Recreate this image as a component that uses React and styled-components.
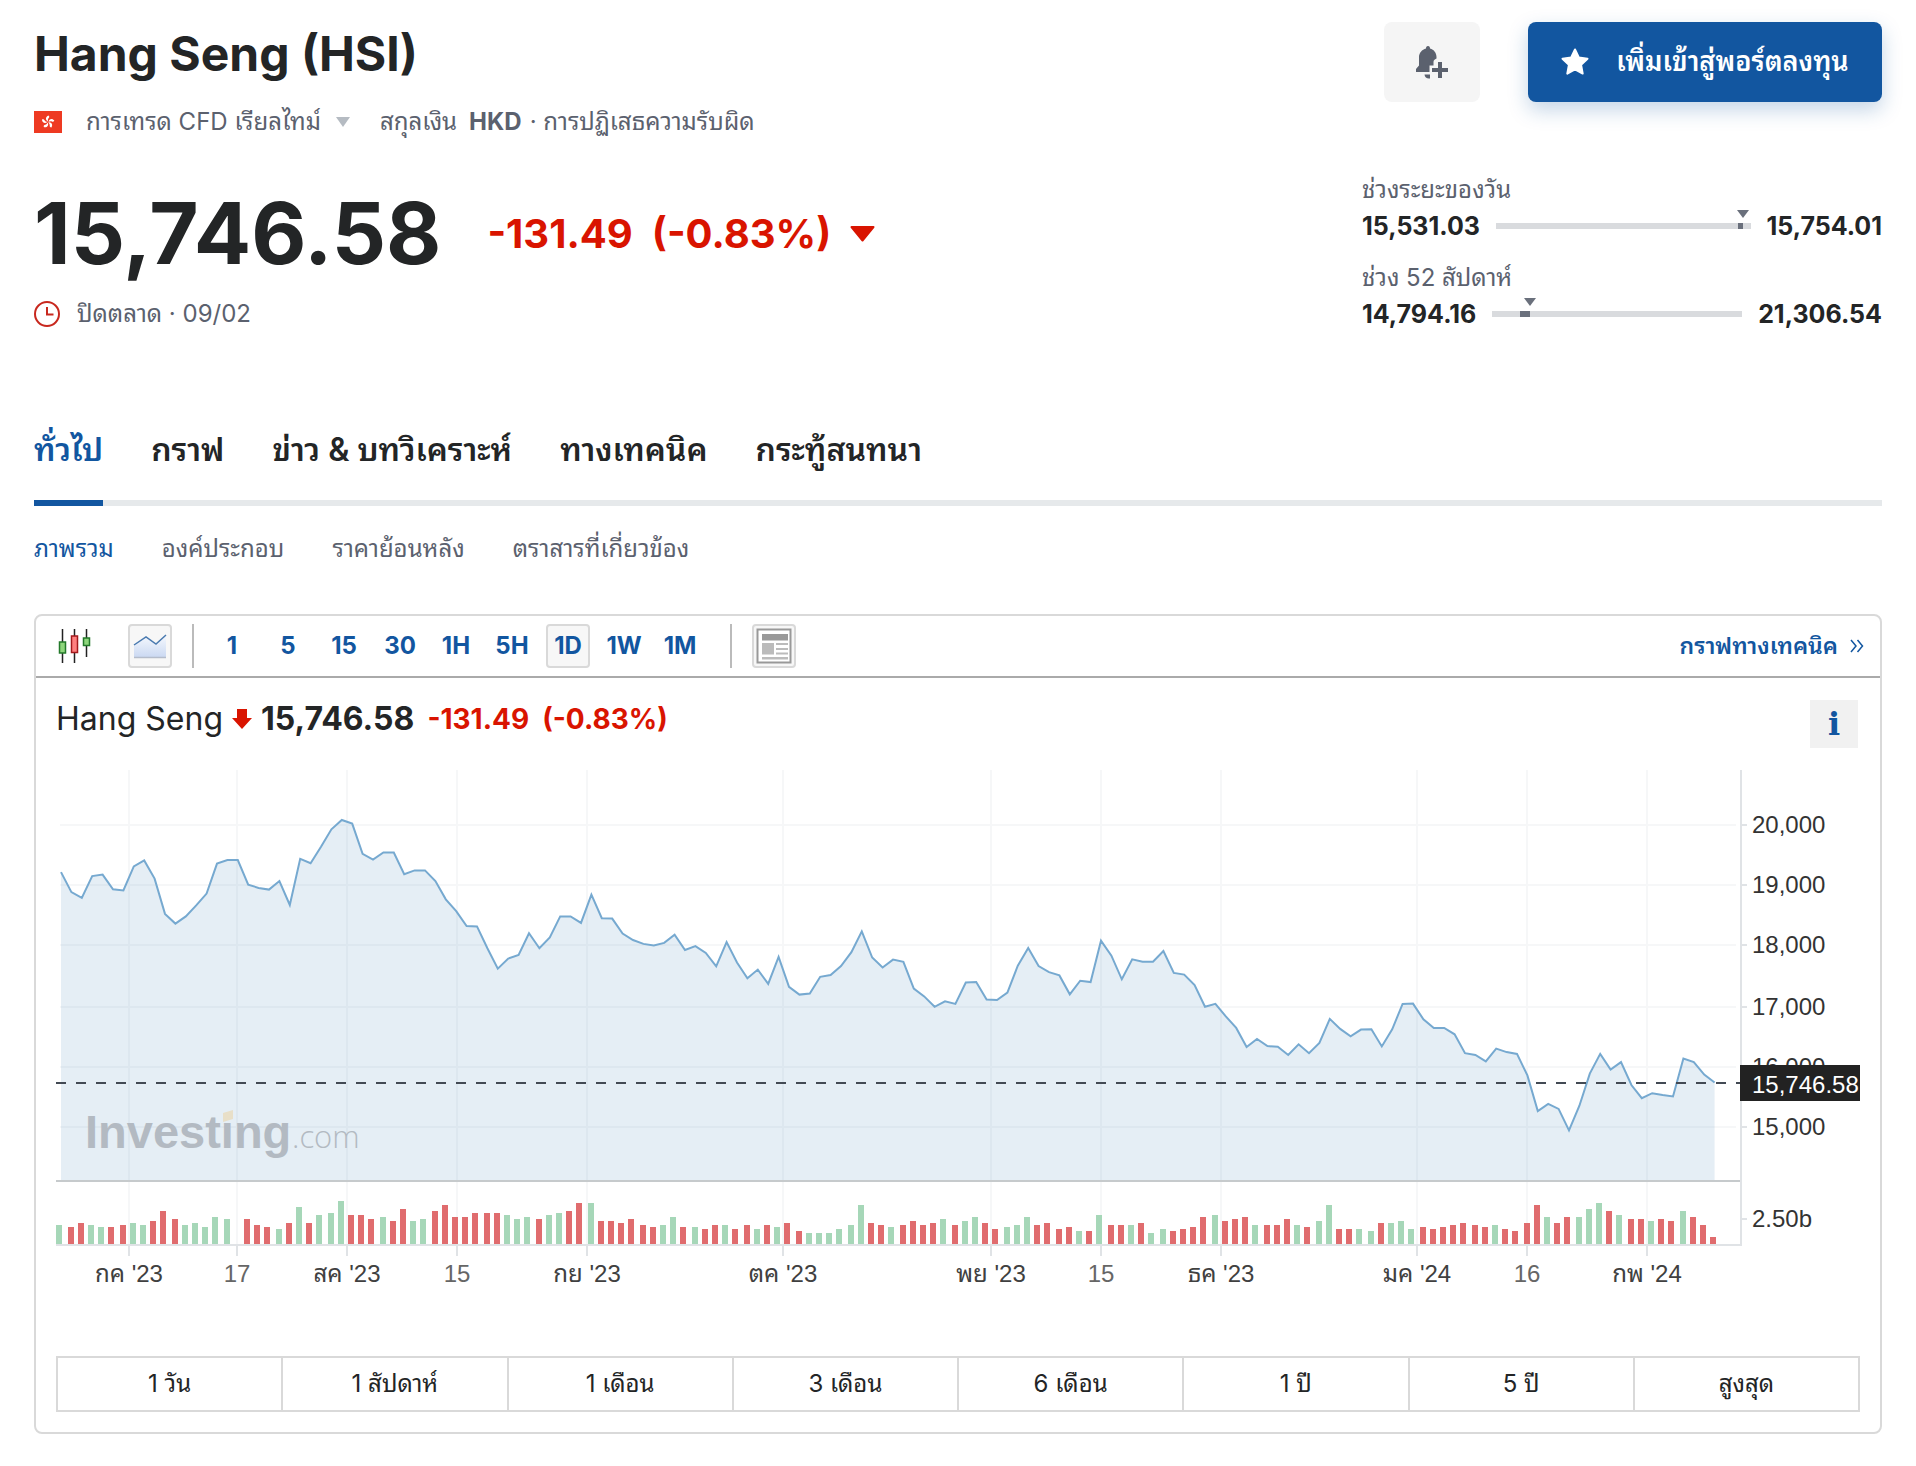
import React from "react";
import styled, { createGlobalStyle } from "styled-components";

const GlobalStyle = createGlobalStyle`
  *, *::before, *::after { box-sizing: border-box; }
  body {
    margin: 0;
    background: #fff;
    color: #232526;
    font-family: Inter, "Noto Sans Thai Looped", Thonburi, Loma, Garuda, Waree, "Liberation Sans", sans-serif;
    font-size: 24px;
    line-height: 36px;
  }
  button { font: inherit; color: inherit; border: 0; background: none; padding: 0; cursor: pointer; }
  a { color: inherit; text-decoration: none; }
  h1, h2, p { margin: 0; }
  svg { display: block; flex: none; }
`;

const Page = styled.main`
  padding: 22px 34px 32px;
`;

const Header = styled.header`
  display: flex;
  justify-content: space-between;
  gap: 48px;
`;

const Summary = styled.div`
  min-width: 0;
`;

const Title = styled.h1`
  font-size: 48px;
  line-height: 64px;
  font-weight: 700;
`;

const InfoRow = styled.div`
  display: flex;
  align-items: center;
  margin-top: 18px;
  color: #5b616e;
  white-space: nowrap;
`;

const MarketButton = styled.button`
  display: flex;
  align-items: center;
  gap: 14px;
  margin: 0 29px 0 24px;
`;

const Currency = styled.b`
  margin: 0 8px 0 12px;
`;

const PriceRow = styled.div`
  display: flex;
  align-items: center;
  margin-top: 44px;
`;

const LastPrice = styled.span`
  font-size: 85px;
  line-height: 100px;
  font-weight: 700;
`;

const Change = styled.span`
  display: flex;
  align-items: center;
  gap: 19px;
  margin-left: 46px;
  color: #d91400;
  font-size: 40px;
  font-weight: 700;
`;

const ClosedRow = styled.div`
  display: flex;
  align-items: center;
  gap: 17px;
  margin-top: 12px;
  color: #5b616e;
`;

const Aside = styled.div`
  width: 520px;
  flex: none;
`;

const Actions = styled.div`
  display: flex;
  justify-content: flex-end;
  gap: 48px;
  margin-bottom: 70px;
`;

const AlertButton = styled.button`
  display: grid;
  place-items: center;
  width: 96px;
  height: 80px;
  border-radius: 8px;
  background: #f5f5f5;
`;

const PortfolioButton = styled.button`
  display: flex;
  align-items: center;
  justify-content: center;
  gap: 27px;
  width: 354px;
  height: 80px;
  border-radius: 8px;
  background: #1256a0;
  color: #fff;
  font-size: 27px;
  font-weight: 600;
  white-space: nowrap;
  box-shadow: 0 8px 20px rgba(18, 86, 160, 0.25);
`;

const RangeBlock = styled.div`
  margin-top: 16px;
`;

const RangeLabel = styled.p`
  color: #5b616e;
`;

const RangeValues = styled.div`
  display: flex;
  align-items: center;
  gap: 16px;
  font-size: 25px;
  font-weight: 700;
`;

const Track = styled.div`
  position: relative;
  flex: 1;
  height: 6px;
  background: #d9dbde;
`;

const TrackFill = styled.span`
  position: absolute;
  top: 0;
  height: 6px;
  background: #6a707c;
`;

const TrackPointer = styled.span`
  position: absolute;
  top: -13px;
  margin-left: -6px;
  border: 6px solid transparent;
  border-top: 8px solid #6a707c;
  border-bottom: 0;
`;

const Tabs = styled.nav`
  display: flex;
  gap: 48px;
  margin-top: 98px;
  box-shadow: inset 0 -6px #e6e9eb;
`;

const Tab = styled.a`
  height: 76px;
  border-bottom: 6px solid ${(p) => (p.$active ? "#1256a0" : "transparent")};
  color: ${(p) => (p.$active ? "#1256a0" : "#232526")};
  font-size: 32px;
  line-height: 40px;
  font-weight: 600;
  white-space: nowrap;
`;

const SubTabs = styled.nav`
  display: flex;
  gap: 48px;
  margin: 25px 0 47px;
`;

const SubTab = styled.a`
  height: 36px;
  color: ${(p) => (p.$active ? "#1256a0" : "#5b616e")};
  white-space: nowrap;
`;

const ChartCard = styled.section`
  border: 2px solid #d9d9d9;
  border-radius: 8px;
`;

const Toolbar = styled.div`
  display: flex;
  align-items: center;
  height: 62px;
  padding: 0 16px;
  border-bottom: 2px solid #aaa;
`;

const ChartTypes = styled.div`
  display: flex;
  gap: 32px;
`;

const Intervals = styled.div`
  display: flex;
  gap: 12px;
`;

const ToolButton = styled.button`
  display: grid;
  place-items: center;
  width: 44px;
  height: 44px;
  border: 2px solid ${(p) => (p.$active ? "#d9d9d9" : "transparent")};
  border-radius: 4px;
  background: ${(p) => (p.$active ? "#f7f7f7" : "transparent")};
  color: #1256a0;
  font-weight: 700;
  white-space: nowrap;
`;

const Divider = styled.span`
  width: 2px;
  height: 44px;
  margin: 0 ${(p) => p.$after}px 0 ${(p) => p.$before}px;
  background: #bbb;
`;

const TechnicalLink = styled.a`
  display: flex;
  align-items: center;
  gap: 12px;
  margin-left: auto;
  color: #1256a0;
  font-size: 23px;
  font-weight: 600;
`;

const ChartBody = styled.div`
  padding: 22px 20px 20px;
`;

const ChartHead = styled.div`
  display: flex;
  align-items: flex-start;
  margin-bottom: 22px;
  padding-right: 2px;
  line-height: 38px;
`;

const ChartName = styled.h2`
  display: flex;
  align-items: center;
  gap: 9px;
  font-size: 32px;
  font-weight: 400;
`;

const ChartChange = styled.span`
  display: flex;
  gap: 13px;
  margin-left: 13px;
  color: #d91400;
  font-size: 28px;
  font-weight: 700;
`;

const InfoButton = styled.button`
  width: 48px;
  height: 48px;
  margin-left: auto;
  background: #f1f1f1;
  color: #1256a0;
  font-family: "DejaVu Serif", serif;
  font-size: 32px;
  font-weight: 700;
`;

const ChartSvg = styled.svg`
  width: 100%;
  height: auto;
  font-family: "Liberation Sans", "Noto Sans Thai Looped", Thonburi, Loma, Garuda, Waree, Arial, sans-serif;
  font-size: 24px;
`;

const Periods = styled.div`
  display: grid;
  grid-template-columns: repeat(8, 1fr);
  margin-top: 56px;
  border: 2px solid #d9d9d9;
  border-left: 0;
`;

const Period = styled.button`
  height: 52px;
  border-left: 2px solid #d9d9d9;
`;

/* Daily close, as depth below the top of the price pane in chart units. */
const CLOSES = [
  258, 314, 330, 269, 265, 306, 309, 242, 225, 276, 375, 402, 382, 351, 318, 234, 224, 224, 293, 302,
  307, 283, 350, 221, 233, 187, 138, 112, 122, 207, 223, 203, 203, 264, 253, 253, 283, 334, 367, 409,
  410, 471, 528, 500, 490, 429, 471, 441, 382, 382, 400, 321, 387, 388, 430, 448, 459, 463, 456, 433,
  476, 465, 484, 522, 454, 511, 555, 531, 571, 495, 579, 601, 598, 551, 546, 521, 482, 424, 497, 525,
  503, 509, 584, 606, 635, 620, 627, 567, 566, 615, 616, 595, 520, 470, 521, 538, 547, 600, 562, 566,
  450, 492, 558, 502, 509, 509, 479, 540, 545, 574, 635, 627, 662, 694, 748, 725, 745, 747, 770, 740,
  765, 736, 669, 697, 718, 699, 698, 746, 698, 627, 626, 670, 694, 694, 712, 765, 770, 788, 752, 762,
  767, 827, 927, 907, 921, 981, 912, 822, 767, 811, 790, 854, 891, 877, 882, 886, 780, 790, 825, 847,
];

/* Daily volume: r = down day, g = up day, followed by the bar height. */
const VOLUMES = (
  "g19 r17 r21 g19 g17 r17 r19 g21 g19 r23 r33 r25 g19 g21 g17 g27 g25 g0 r25 r19 " +
  "r17 g15 r21 g37 r21 g29 g31 g43 r29 r29 r25 g27 r23 r35 g23 g25 r33 r39 r27 r27 " +
  "r31 r31 r31 g29 g25 g27 r25 g29 g31 r33 r41 g41 r23 r23 r21 r25 r19 r17 g19 g27 " +
  "r17 g17 r15 r19 g19 r15 r19 g15 r19 g17 r21 r13 g11 g11 g11 g15 g19 g39 r21 r19 " +
  "g17 r19 r23 r19 r21 g25 r19 g23 g27 r21 r15 g17 g19 g27 r19 r21 r15 r17 g13 r13 " +
  "g29 r19 r19 g19 r21 g11 g15 r13 r15 r17 r27 g29 r23 r25 r27 g19 r19 r19 r25 g19 " +
  "r17 g23 g39 r15 r15 g15 g13 r21 g21 g23 g15 r17 r15 r17 r19 r21 r19 r17 g19 r15 " +
  "r13 r21 r39 g27 r21 r27 g27 g35 g41 r33 g29 r25 r25 g23 r25 r23 g33 r27 r19 r7"
).split(" ");

const PRICE_TICKS = [
  ["20,000", 55], ["19,000", 115], ["18,000", 175], ["17,000", 237], ["16,000", 297], ["15,000", 357],
];

const DATE_TICKS = [
  ["กค '23", 73], ["17", 181], ["สค '23", 291], ["15", 401], ["กย '23", 531], ["ตค '23", 727],
  ["พย '23", 935], ["15", 1045], ["ธค '23", 1165], ["มค '24", 1361], ["16", 1471], ["กพ '24", 1591],
];

const LINE = CLOSES.map((v, i) => `${(5 + i * 10.4).toFixed(1)},${(10 + v / 2.8).toFixed(1)}`).join(" ");

function PriceChart() {
  return (
    <ChartSvg viewBox="0 0 1804 530" role="img" aria-label="Hang Seng 1D">
      {DATE_TICKS.map(([, x]) => (
        <path key={x} d={`M${x} 0V474`} stroke="#f6f7f8" strokeWidth="2" />
      ))}
      {PRICE_TICKS.map(([, y]) => (
        <path key={y} d={`M4 ${y}H1680`} stroke="#f6f7f8" strokeWidth="2" />
      ))}
      <polygon points={`5,410 ${LINE} 1658.6,410`} fill="#5b96c0" fillOpacity="0.16" />
      <polyline points={LINE} fill="none" stroke="#76a9d0" strokeWidth="2" />
      <g fill="#b3bac2">
        <text x="29" y="378" fontSize="47" fontWeight="700">Investing</text>
        <text x="236" y="378" fontSize="31" fontFamily="Open Sans" fontWeight="300">.com</text>
      </g>
      <path d="M167 343l10-3v9l-10 3z" fill="#e8dfc8" />
      <path d="M0 411H1684" stroke="#c6cacc" strokeWidth="2" />
      <path d="M0 313H1684" stroke="#434a54" strokeWidth="2" strokeDasharray="10 10" />
      {VOLUMES.map((v, i) => {
        const h = Number(v.slice(1));
        return (
          <rect
            key={i}
            x={2 * Math.ceil(i * 5.2)}
            y={474 - h}
            width="6"
            height={h}
            fill={v[0] === "g" ? "#a6d7b8" : "#e06c6e"}
          />
        );
      })}
      <path d="M0 475H1685V0" fill="none" stroke="#e0e3e6" strokeWidth="2" />
      {DATE_TICKS.map(([label, x]) => (
        <g key={x}>
          <path d={`M${x} 476V486`} stroke="#e0e3e6" strokeWidth="2" />
          <text x={x} y="512" textAnchor="middle" fill={label.length > 2 ? "#404040" : "#666"}>{label}</text>
        </g>
      ))}
      {[...PRICE_TICKS, ["2.50b", 449]].map(([label, y]) => (
        <g key={label}>
          <path d={`M1686 ${y}H1691`} stroke="#e0e3e6" strokeWidth="2" />
          <text x="1696" y={y + 8} fill="#333">{label}</text>
        </g>
      ))}
      <rect x="1684" y="295" width="120" height="36" fill="#222" />
      <text x="1696" y="323" fill="#fff">15,746.58</text>
    </ChartSvg>
  );
}

function Flag() {
  return (
    <svg width="28" height="22" viewBox="0 0 28 22" aria-hidden="true">
      <path d="M0 0h28v22H0z" fill="#ee3a22" />
      <g fill="#fff">
        {[0, 72, 144, 216, 288].map((a) => (
          <path key={a} transform={`rotate(${a} 14 11)`} d="M14 10.500c-3-1.500-2.500-5 .5-6 1 1 1 1.800.2 2.600-.9 1-.9 2-.7 3.400z" />
        ))}
      </g>
    </svg>
  );
}

function CandlesIcon() {
  return (
    <svg width="33" height="34" viewBox="0 0 33 34" aria-hidden="true">
      <path d="M4.500 0v34M16.500 0v34M28.500 0v28" stroke="#222" strokeWidth="1.500" />
      <path d="M1.500 13h6v11h-6zM25.500 9h6v7.500h-6z" fill="#8ed67c" stroke="#23792a" strokeWidth="1.500" />
      <path d="M13.500 7h6v16.500h-6z" fill="#ff8080" stroke="#a3191c" strokeWidth="1.500" />
    </svg>
  );
}

function AreaIcon() {
  return (
    <svg width="34" height="26" viewBox="0 0 34 26" aria-hidden="true">
      <defs>
        <linearGradient id="area" x1="0" y1="0" x2="0" y2="1">
          <stop offset="0" stopColor="#f6f9fe" />
          <stop offset="1" stopColor="#cbd9f2" />
        </linearGradient>
      </defs>
      <path d="M1 12L13 4l10 7L33 2v22H1z" fill="url(#area)" />
      <path d="M1 12L13 4l10 7L33 2" fill="none" stroke="#4b7bb0" strokeWidth="1.500" />
      <path d="M1 24.500h32" stroke="#b4bccb" strokeWidth="1.500" />
    </svg>
  );
}

function NewsIcon() {
  return (
    <svg width="36" height="36" viewBox="0 0 36 36" aria-hidden="true">
      <path d="M1.500 1.500h33v33h-33z" fill="#fff" stroke="#999" strokeWidth="2" />
      <path d="M6 6h26v6.500H6z" fill="#999" />
      <path d="M6 15h12v11.500H6zM20 15h12v2H20zM20 20h12v2H20zM20 24.500h12v2H20zM6 29h26v2.500H6z" fill="#bbb" />
    </svg>
  );
}

function BellPlusIcon() {
  return (
    <svg width="33" height="33" viewBox="0 0 33 33" aria-hidden="true" fill="#5b616e">
      <path d="M12 0c1.500 0 2 1 2 2.500C18 3.500 20.500 7 20.500 11v1.500c-2 .8-3 1.800-3 3.500v3.500h-4v6.500H0v-3l3-3.500V11C3 7 6 3.500 10 2.500 10 1 10.500 0 12 0z" />
      <path d="M8.500 28.500h5.500v4C11 33 8.800 31.500 8.500 28.500z" />
      <path d="M22 16h4v6h6v4h-6v6h-4v-6h-6v-4h6z" />
    </svg>
  );
}

function StarIcon() {
  return (
    <svg width="28" height="28" viewBox="0 0 28 28" aria-hidden="true">
      <path d="M14 1.500l3.800 8 8.700 1.200-6.400 6.200 1.600 8.700L14 21.400l-7.700 4.200 1.600-8.700-6.400-6.200 8.700-1.200z" fill="#fff" stroke="#fff" strokeWidth="2" strokeLinejoin="round" />
    </svg>
  );
}

function ClockIcon() {
  return (
    <svg width="26" height="26" viewBox="0 0 26 26" fill="none" stroke="#c8281e" strokeWidth="2" aria-hidden="true">
      <circle cx="13" cy="13" r="12" />
      <path d="M13 6v7.500h6.500" />
    </svg>
  );
}

function Range({ label, low, high, from, at }) {
  return (
    <RangeBlock>
      <RangeLabel>{label}</RangeLabel>
      <RangeValues>
        <span>{low}</span>
        <Track>
          <TrackFill style={{ left: `${from}%`, right: `${100 - at}%` }} />
          <TrackPointer style={{ left: `${at}%` }} />
        </Track>
        <span>{high}</span>
      </RangeValues>
    </RangeBlock>
  );
}

const TABS = ["ทั่วไป", "กราฟ", "ข่าว & บทวิเคราะห์", "ทางเทคนิค", "กระทู้สนทนา"];
const SUB_TABS = ["ภาพรวม", "องค์ประกอบ", "ราคาย้อนหลัง", "ตราสารที่เกี่ยวข้อง"];
const INTERVALS = ["1", "5", "15", "30", "1H", "5H", "1D", "1W", "1M"];
const PERIODS = ["1 วัน", "1 สัปดาห์", "1 เดือน", "3 เดือน", "6 เดือน", "1 ปี", "5 ปี", "สูงสุด"];

export default function App() {
  return (
    <>
      <GlobalStyle />
      <Page>
        <Header>
          <Summary>
            <Title>Hang Seng (HSI)</Title>
            <InfoRow>
              <Flag />
              <MarketButton>
                การเทรด CFD เรียลไทม์
                <svg width="16" height="10" viewBox="0 0 16 10" aria-hidden="true">
                  <path d="M1 0h14L8 10z" fill="#b5bbc2" />
                </svg>
              </MarketButton>
              <span>สกุลเงิน</span>
              <Currency>HKD</Currency>
              <span>· การปฏิเสธความรับผิด</span>
            </InfoRow>
            <PriceRow>
              <LastPrice>15,746.58</LastPrice>
              <Change>
                <span>-131.49</span>
                <span>(-0.83%)</span>
                <svg width="25" height="16" viewBox="0 0 25 16" aria-hidden="true">
                  <path d="M1.500 1h22l-11 13.500z" fill="#d91400" stroke="#d91400" strokeWidth="2" strokeLinejoin="round" />
                </svg>
              </Change>
            </PriceRow>
            <ClosedRow>
              <ClockIcon />
              <span>ปิดตลาด · 09/02</span>
            </ClosedRow>
          </Summary>
          <Aside>
            <Actions>
              <AlertButton aria-label="Create alert"><BellPlusIcon /></AlertButton>
              <PortfolioButton><StarIcon />เพิ่มเข้าสู่พอร์ตลงทุน</PortfolioButton>
            </Actions>
            <Range label="ช่วงระยะของวัน" low="15,531.03" high="15,754.01" from={95} at={97} />
            <Range label="ช่วง 52 สัปดาห์" low="14,794.16" high="21,306.54" from={11} at={15} />
          </Aside>
        </Header>

        <Tabs>
          {TABS.map((t, i) => <Tab key={t} href="#" $active={i === 0}>{t}</Tab>)}
        </Tabs>
        <SubTabs>
          {SUB_TABS.map((t, i) => <SubTab key={t} href="#" $active={i === 0}>{t}</SubTab>)}
        </SubTabs>

        <ChartCard>
          <Toolbar>
            <ChartTypes>
              <ToolButton aria-label="Candles"><CandlesIcon /></ToolButton>
              <ToolButton $active aria-label="Area"><AreaIcon /></ToolButton>
            </ChartTypes>
            <Divider $before={20} $after={16} />
            <Intervals>
              {INTERVALS.map((t) => <ToolButton key={t} $active={t === "1D"}>{t}</ToolButton>)}
            </Intervals>
            <Divider $before={28} $after={20} />
            <ToolButton $active aria-label="News"><NewsIcon /></ToolButton>
            <TechnicalLink href="#">
              กราฟทางเทคนิค
              <svg width="14" height="14" viewBox="0 0 14 14" fill="none" stroke="#1256a0" strokeWidth="1.500" aria-hidden="true">
                <path d="M1 1l5 6-5 6M7.500 1l5 6-5 6" />
              </svg>
            </TechnicalLink>
          </Toolbar>
          <ChartBody>
            <ChartHead>
              <ChartName>
                Hang Seng
                <svg width="20" height="20" viewBox="0 0 20 20" aria-hidden="true">
                  <path d="M5 0h10v9h5L10 20 0 9h5z" fill="#d91400" />
                </svg>
                <b>15,746.58</b>
              </ChartName>
              <ChartChange>
                <span>-131.49</span>
                <span>(-0.83%)</span>
              </ChartChange>
              <InfoButton aria-label="Info">i</InfoButton>
            </ChartHead>
            <PriceChart />
            <Periods>
              {PERIODS.map((t) => <Period key={t}>{t}</Period>)}
            </Periods>
          </ChartBody>
        </ChartCard>
      </Page>
    </>
  );
}
